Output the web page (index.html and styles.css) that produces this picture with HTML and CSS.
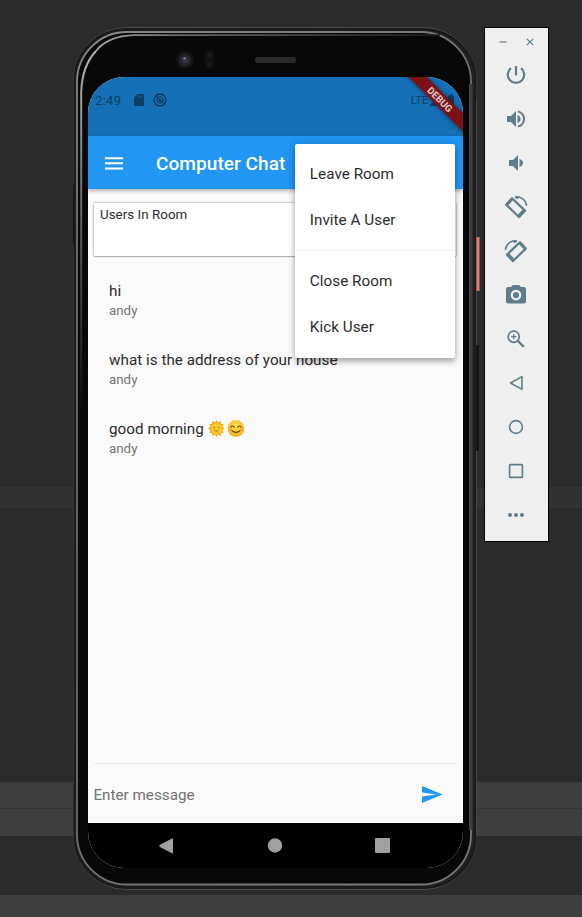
FILE: index.html
```html
<!DOCTYPE html>
<html lang="en">
<head>
<meta charset="utf-8">
<title>Computer Chat</title>
<link rel="stylesheet" href="styles.css">
</head>
<body>
<main class="desktop">
  <section class="phone">
    <svg class="shell" width="406" height="864" viewBox="73 27 406 864" fill="none">
      <defs>
        <linearGradient id="rim" x1="73" y1="27" x2="478" y2="890" gradientUnits="userSpaceOnUse">
          <stop offset="0" stop-color="#8b8b8c"/><stop offset=".25" stop-color="#6c6c6e"/><stop offset=".6" stop-color="#68686a"/><stop offset="1" stop-color="#77797b"/>
        </linearGradient>
        <linearGradient id="fade" x1="0" y1="60" x2="0" y2="410" gradientUnits="userSpaceOnUse">
          <stop offset="0" stop-color="#b0b0b0"/><stop offset=".4" stop-color="#6b6b6c"/><stop offset="1" stop-color="#0a0a0b"/>
        </linearGradient>
        <linearGradient id="topfade" x1="90" y1="0" x2="440" y2="0" gradientUnits="userSpaceOnUse">
          <stop offset="0" stop-color="#b0b0b0"/><stop offset=".25" stop-color="#6b6b6c"/><stop offset="1" stop-color="#1a1a1b"/>
        </linearGradient>
      </defs>
      <rect x="73.5" y="27.5" width="403" height="862" rx="53" fill="#202122" stroke="#4d4d4f"/>
      <rect x="74.5" y="29.5" width="401" height="858" rx="51" stroke="#19191a" stroke-width="2"/>
      <rect x="77" y="32" width="394" height="852.5" rx="50" fill="#080809" stroke="url(#rim)" stroke-width="1.8"/>
      <path d="M81.2 410V92Q82 66 96 51" stroke="url(#fade)" stroke-width="2"/>
      <path d="M96 51Q108 36 134 35.2H440" stroke="url(#topfade)" stroke-width="1.8"/>
      <path d="M471 84V830" stroke="#3c3f42" stroke-width="3"/>
      <path d="M469.5 84V830" stroke="#56595c" stroke-width=".7"/>
      <path d="M476.5 100V835" stroke="#454749"/>
      <path d="M478 237V291" stroke="#e77a62" stroke-width="3"/>
      <path d="M477.5 345V451" stroke="#101112" stroke-width="2.5"/>
      <path d="M73.5 185V245" stroke="#171718" stroke-width="1"/>
      <circle cx="185" cy="60" r="9" fill="#141416"/><circle cx="185" cy="60" r="6" fill="#26262b"/><circle cx="185" cy="60" r="3.2" fill="#34343f"/><circle cx="184.5" cy="58.5" r="1.1" fill="#9090a8"/>
      <rect x="205" y="50" width="9" height="19" rx="4.5" fill="#121214"/><circle cx="209.5" cy="55" r="2" fill="#1c1c20"/><circle cx="209.5" cy="64" r="2" fill="#1c1c20"/>
      <rect x="255" y="57" width="41" height="6" rx="2" fill="#2b2a29"/>
    </svg>
    <div class="screen">
      <div class="status">
        <span class="time">2:49</span>
        <svg class="sd" width="10" height="12" viewBox="0 0 10 12"><path d="M3.5 0H9a1 1 0 0 1 1 1v10a1 1 0 0 1-1 1H1a1 1 0 0 1-1-1V3.5Z" fill="#0d3f65"/><path d="M4 1.5v2M6 1.5v2M8 1.5v2" stroke="#1470b7" stroke-width=".8"/></svg>
        <svg width="14" height="14" viewBox="0 0 14 14" fill="none" stroke="#0d3f65"><circle cx="7" cy="7" r="5.9" stroke-width="1.5"/><path d="M3.2 3.2 11 11M5.4 4.1a3.5 3.5 0 0 1 4.5 4.5M4 5.6a3.5 3.5 0 0 0 4.4 4.4" stroke-width="1.2"/><path d="m5 7 2-1 2 2-1 2Z" fill="#0d3f65" stroke="none"/></svg>
        <span class="lte">LTE</span>
        <svg class="signal" width="26" height="13" viewBox="0 0 26 13" fill="#0d3f65"><path d="M0 12 12 0v12ZM20 1.5h1.5V0h2v1.5H25V12h-6V1.5Z"/></svg>
      </div>
      <header class="appbar">
        <svg width="18" height="13" viewBox="0 0 18 13"><path d="M0 1.2h18M0 6.3h18M0 11.4h18" stroke="#fff" stroke-width="2"/></svg>
        <h1>Computer Chat</h1>
      </header>
      <div class="users">Users In Room</div>
      <ul class="messages">
        <li><p>hi</p><small>andy</small></li>
        <li><p>what is the address of your house</p><small>andy</small></li>
        <li><p>good morning <svg class="emoji" width="37" height="17" viewBox="0 0 37 17">
          <defs><radialGradient id="face" cx=".5" cy=".35" r=".7"><stop offset="0" stop-color="#ffe34f"/><stop offset="1" stop-color="#f5a91d"/></radialGradient></defs>
          <path d="m8.5.2 1.6 2.2L12.6 1l.4 2.8 2.8.4-1.4 2.5 2.4 1.8-2.4 1.8 1.4 2.5-2.8.4-.4 2.8-2.5-1.4-1.6 2.3-1.7-2.3L4.4 16l-.5-2.8-2.7-.4 1.3-2.5L.2 8.5l2.3-1.8-1.3-2.5 2.7-.4L4.4 1l2.4 1.4Z" fill="#faad1b"/>
          <circle cx="8.5" cy="8.5" r="5.5" fill="#ffcb30"/><circle cx="6.4" cy="7.6" r=".7" fill="#775016"/><circle cx="10.6" cy="7.6" r=".7" fill="#775016"/><path d="M6.7 10.5q1.8 1.5 3.6 0" fill="none" stroke="#775016" stroke-width=".7"/>
          <circle cx="28" cy="8.5" r="8.4" fill="url(#face)"/><path d="M22.7 7.3q1.8-2.5 3.6 0M29.7 7.3q1.8-2.5 3.6 0M23.6 10.3q4.4 4 8.8 0" fill="none" stroke="#66430e" stroke-width="1.1" stroke-linecap="round"/><circle cx="22.8" cy="9.8" r="1.5" fill="#f49334" opacity=".7"/><circle cx="33.2" cy="9.8" r="1.5" fill="#f49334" opacity=".7"/>
        </svg></p><small>andy</small></li>
      </ul>
      <footer class="composer">
        <span>Enter message</span>
        <svg width="21" height="17" viewBox="0 0 21 17"><path d="M0 17 20.5 8.5 0 0v6.6l14.5 1.9L0 10.4Z" fill="#2196f3"/></svg>
      </footer>
      <nav class="navbar">
        <svg width="15" height="16" viewBox="0 0 15 16"><path d="M13.5.8V15L.8 8.4q-.8-.5 0-1Z" fill="#a0a0a0" stroke="#a0a0a0" stroke-linejoin="round"/></svg>
        <svg width="15" height="15" viewBox="0 0 15 15"><circle cx="8" cy="7.5" r="7.2" fill="#a0a0a0"/></svg>
        <svg width="15" height="15" viewBox="0 0 15 15"><rect width="15" height="15" rx="1" fill="#a0a0a0"/></svg>
      </nav>
      <div class="menu">
        <div>Leave Room</div>
        <div>Invite A User</div>
        <hr>
        <div>Close Room</div>
        <div>Kick User</div>
      </div>
      <div class="debug">DEBUG</div>
    </div>
  </section>
  <aside class="tools">
    <div class="window">
      <svg width="8" height="8" viewBox="0 0 8 8"><path d="M.5 4h7"/></svg>
      <svg width="8" height="8" viewBox="0 0 8 8"><path d="m.8.8 6.4 6.4M7.2.8.8 7.2"/></svg>
    </div>
    <svg class="tool" viewBox="0 0 24 24"><path d="M12 3v9.5" stroke-width="2.2"/><path d="M7 5.2a8.2 8.2 0 1 0 10 0" stroke-width="2.2"/></svg>
    <svg class="tool" viewBox="0 0 24 24"><path class="solid" d="M3 9v6h4l5 5V4L7 9ZM13.5 8v8q3-1 3-4t-3-4Z"/><path d="M14 4.4a7.8 7.8 0 0 1 0 15.2" stroke-width="2.1"/></svg>
    <svg class="tool" viewBox="0 0 24 24"><path class="solid" d="M5 9v6h4l5 5V4L9 9ZM15.5 8v8q3.5-1.2 3.5-4t-3.5-4Z"/></svg>
    <svg class="tool" viewBox="0 0 24 24"><g id="turn"><path class="solid" fill-rule="evenodd" d="M7.1 2.6q.9-.9 1.8 0L21.8 14.7q.9.9 0 1.8L16 22.7q-.9.9-1.8 0L1.4 10.5q-.9-.9 0-1.8ZM8.7 5.6 4.4 10.2 14 19.4l4.4-4.6Z"/><path d="M11 2.4c6-1.5 11 2.5 11.6 8.5" stroke-width="1.5"/><path class="solid" d="m11 1 5 .6-3 3Z"/></g></svg>
    <svg class="tool" viewBox="0 0 24 24"><use href="#turn" transform="translate(24 0) scale(-1 1)"/></svg>
    <svg class="tool" viewBox="0 0 24 24"><path class="solid" fill-rule="evenodd" d="M8.8 2 7 4H4a2 2 0 0 0-2 2v12.5a2 2 0 0 0 2 2h16a2 2 0 0 0 2-2V6a2 2 0 0 0-2-2h-3l-1.8-2ZM12 6.8a5.3 5.3 0 1 1 0 10.6 5.3 5.3 0 0 1 0-10.6Z"/><circle class="solid" cx="12" cy="12.1" r="3.1"/></svg>
    <svg class="tool small" viewBox="0 0 24 24"><circle cx="9.5" cy="9.5" r="6.1" stroke-width="1.9"/><path d="M6.6 9.5h5.8M9.5 6.6v5.8" stroke-width="1.3"/><path d="m14.2 14.2 6.3 6.3" stroke-width="2.6"/></svg>
    <svg class="tool small" viewBox="0 0 24 24"><path d="M18.5 5v14L6 12Z" stroke-width="1.7" stroke-linejoin="round"/></svg>
    <svg class="tool small" viewBox="0 0 24 24"><circle cx="12" cy="12" r="7" stroke-width="1.8"/></svg>
    <svg class="tool small" viewBox="0 0 24 24"><rect x="5" y="5" width="14" height="14" rx=".8" stroke-width="1.8"/></svg>
    <svg class="tool small" viewBox="0 0 24 24"><g class="solid"><circle cx="5.5" cy="12" r="2.2"/><circle cx="12" cy="12" r="2.2"/><circle cx="18.5" cy="12" r="2.2"/></g></svg>
  </aside>
</main>
</body>
</html>
```
FILE: styles.css
```css
* { box-sizing: border-box; }
body { margin: 0; font-family: Roboto, sans-serif; }
h1, p, ul { margin: 0; padding: 0; font-weight: 400; }
svg { display: block; flex: none; }

.desktop {
  width: 582px;
  height: 917px;
  overflow: hidden;
  display: flex;
  align-items: flex-start;
  gap: 6px;
  padding: 27px 0 0 73px;
  background: linear-gradient(#2b2b2b 487px, #323232 487px 508px, #2b2b2b 508px 782px, #3c3f41 782px 808px, #323537 808px 809px, #3c3f41 809px 836px, #2b2b2b 836px 895px, #3c3f41 895px);
}

.phone { position: relative; width: 405px; height: 863px; padding: 50px 15px 22px; flex: none; }
.shell { position: absolute; left: 0; top: 0; overflow: visible; }
.screen {
  position: relative;
  width: 375px;
  height: 791px;
  display: flex;
  flex-direction: column;
  overflow: hidden;
  border-radius: 36px;
  background: #fafafa;
  color: #2c2c2c;
}

.status {
  height: 59px;
  flex: none;
  display: flex;
  align-items: center;
  padding: 0 8px 13px 7px;
  background: #1470b7;
  color: #0d3f65;
  font-size: 13.5px;
}
.time { width: 39px; }
.sd { margin-right: 9px; }
.lte { margin-left: auto; margin-right: 1px; font-size: 11.5px; letter-spacing: -.3px; }

.appbar {
  position: relative;
  height: 53px;
  flex: none;
  display: flex;
  align-items: center;
  gap: 33px;
  padding: 1px 17px 0;
  background: #2196f3;
  box-shadow: 0 2px 4px rgba(0, 0, 0, .3);
  color: #fff;
}
.appbar h1 { font-size: 19.05px; font-weight: 500; letter-spacing: .06px; white-space: nowrap; }

.users {
  height: 53px;
  flex: none;
  margin: 14px 7px 0 5.5px;
  padding: 4px 6.5px;
  background: #fff;
  box-shadow: 0 0 2px rgba(0, 0, 0, .45), 0 1px 1px rgba(0, 0, 0, .15);
  font-size: 13.33px;
  line-height: 16px;
  letter-spacing: .05px;
}

.messages { flex: 1; padding: 14px 21px 0; list-style: none; }
.messages li { height: 69px; padding-top: 11px; }
.messages p { font-size: 15.24px; line-height: 20px; white-space: nowrap; letter-spacing: .02px; }
.messages small { display: block; color: #757575; font-size: 13.33px; line-height: 19px; }
.emoji { display: inline-block; vertical-align: -3px; }

.composer {
  height: 60px;
  flex: none;
  display: flex;
  align-items: center;
  justify-content: space-between;
  margin: 0 5px;
  padding: 2px 15px 0 .4px;
  border-top: 1px solid #eee;
  color: #737373;
  font-size: 15.24px;
}

.navbar {
  height: 45px;
  flex: none;
  display: flex;
  justify-content: space-between;
  align-items: center;
  padding: 0 73px 0 71px;
  background: #000;
}

.menu {
  position: absolute;
  left: 206.5px;
  top: 66.5px;
  width: 160.5px;
  padding: 8.6px 0 7.2px;
  border-radius: 2px;
  background: #fff;
  box-shadow: 0 4px 5px rgba(0, 0, 0, .2), 0 1px 8px rgba(0, 0, 0, .22);
  font-size: 15.24px;
}
.menu div { height: 45.8px; padding-left: 15.3px; line-height: 45.8px; letter-spacing: .04px; }
.menu hr { height: 1px; margin: 6.8px 0 7.4px; border: 0; background: #f0f0f0; }

.debug {
  position: absolute;
  left: 301px;
  top: 16px;
  width: 102px;
  height: 13px;
  transform: rotate(45deg);
  background: #7b1217;
  box-shadow: 0 0 5px rgba(0, 0, 0, .5);
  color: #e0cccc;
  font-size: 9.7px;
  font-weight: 700;
  line-height: 13px;
  text-align: center;
}

.tools {
  width: 65px;
  height: 515px;
  flex: none;
  display: flex;
  flex-direction: column;
  align-items: center;
  gap: 20px;
  border: 1px solid #000;
  background: #efefef;
}
.tools svg { fill: none; stroke: #607d8b; stroke-width: 1.2; overflow: visible; }
.tools .solid { fill: #607d8b; stroke: none; }
.window { display: flex; gap: 19px; padding-top: 10px; margin-bottom: -3px; margin-right: 1px; }
.tool { width: 24px; height: 24px; margin-right: 1px; }
.small { width: 22px; height: 22px; margin: 1px 1px 1px 0; }
```
